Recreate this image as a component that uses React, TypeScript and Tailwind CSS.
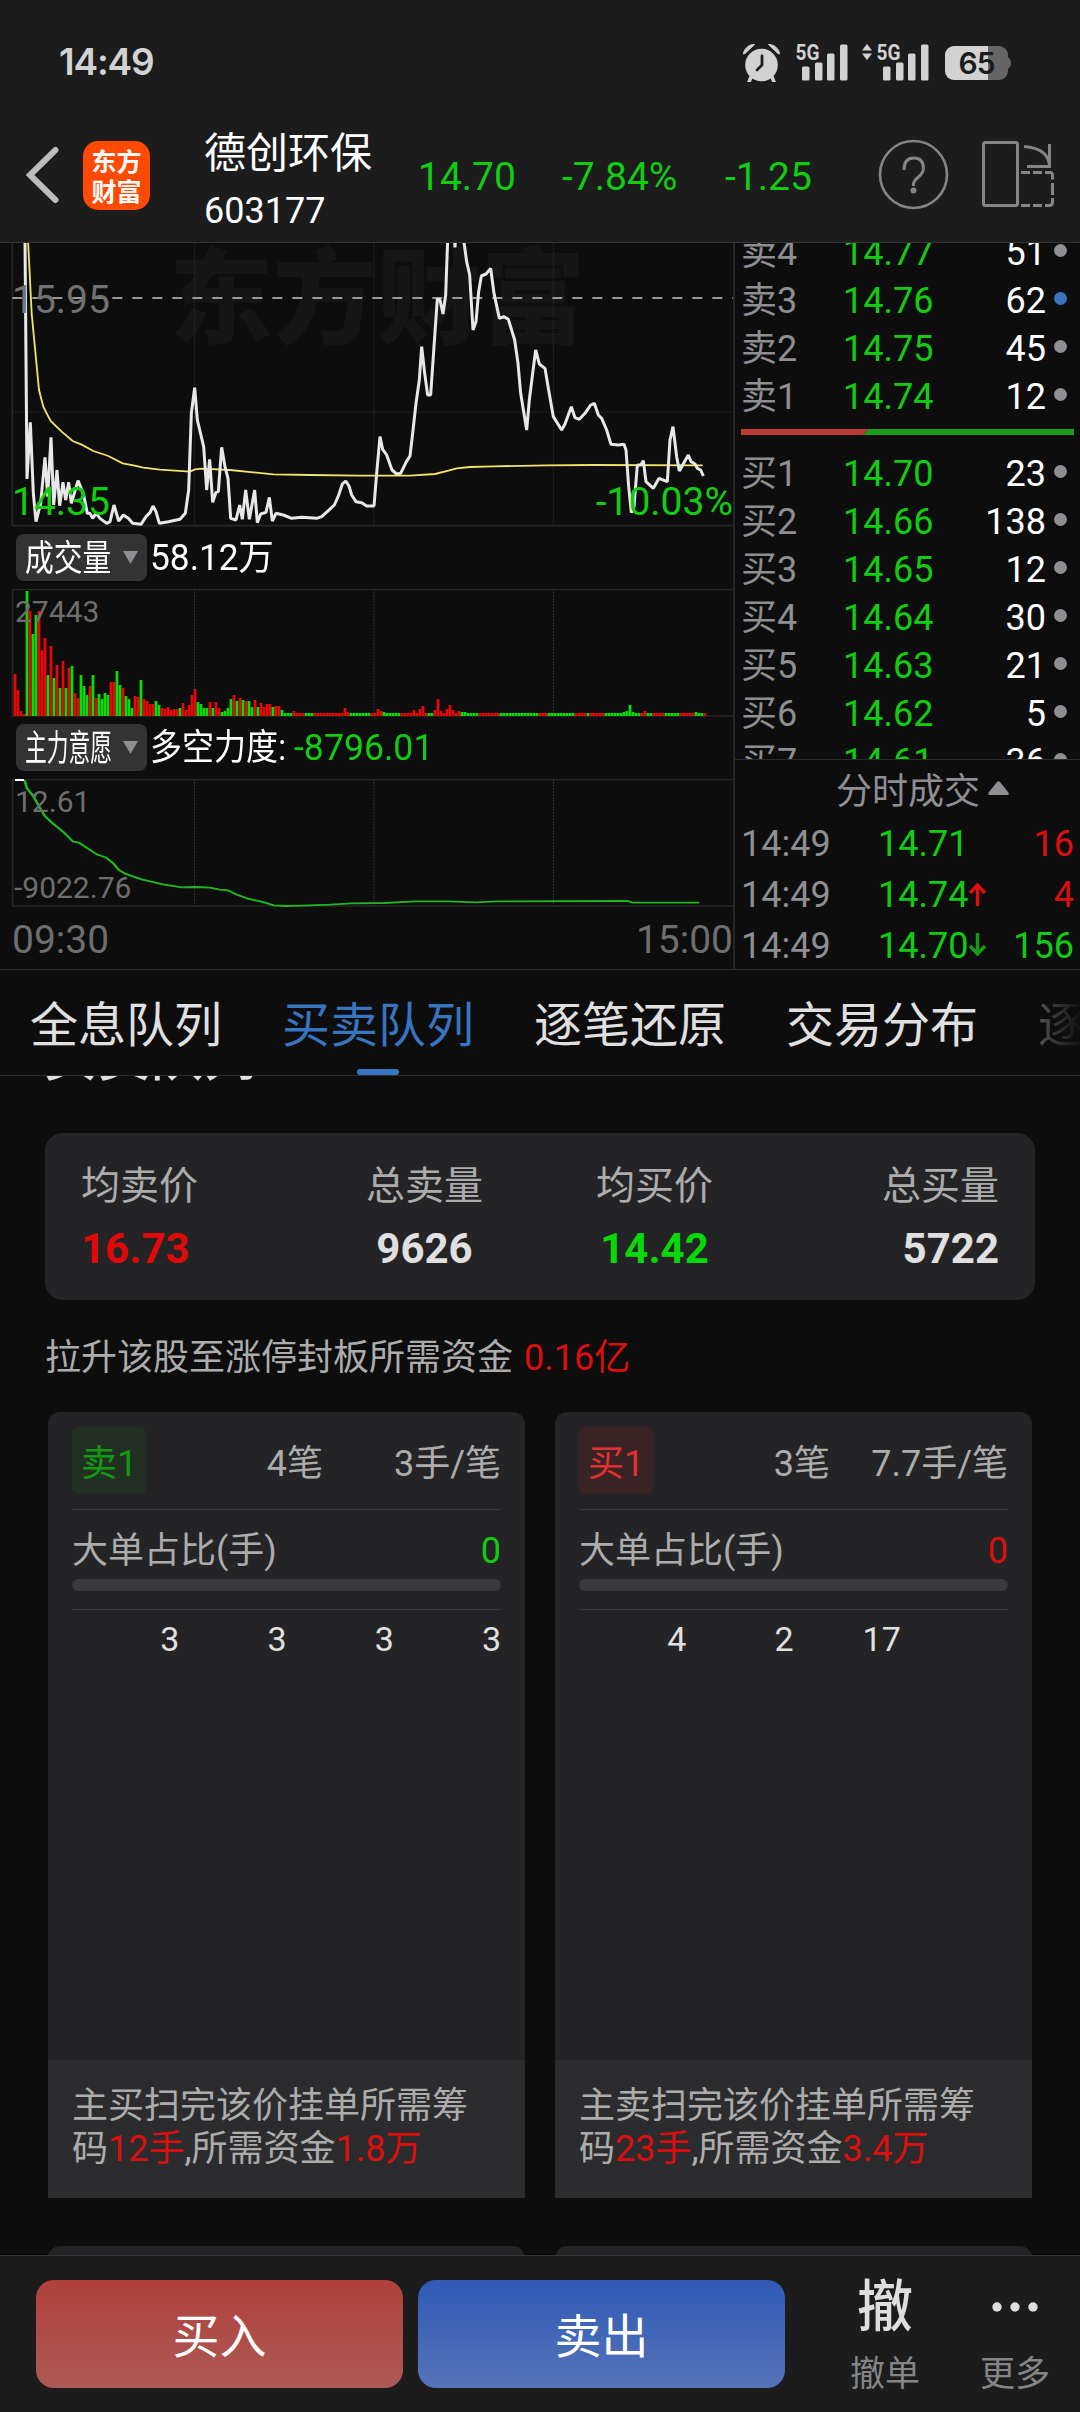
import React from "react";

const PRICE_LINE =
  "75,0 81,717 91,547 100,760 108,845 122,790 135,652 143,770 153,592 161,795 171,690 179,797 189,727 197,780 206,727 214,790 234,722 250,760 262,820 270,820 278,835 288,820 300,835 320,850 330,845 342,795 356,843 370,825 385,835 398,850 423,853 438,830 450,818 459,798 468,815 478,850 505,845 540,838 556,820 566,750 574,520 584,443 592,540 611,620 620,750 629,658 638,787 648,757 655,755 665,622 675,680 684,715 692,835 708,840 719,795 727,838 737,750 748,838 764,750 772,848 782,822 798,817 808,772 817,843 828,820 850,825 875,835 905,832 950,835 965,830 985,812 1003,795 1015,768 1027,732 1037,723 1047,738 1055,765 1068,785 1085,788 1100,798 1122,798 1130,700 1140,590 1148,628 1160,645 1176,690 1190,702 1202,700 1218,667 1230,648 1238,580 1248,490 1258,420 1265,320 1274,400 1283,465 1292,465 1302,320 1312,177 1320,180 1329,222 1337,165 1343,0 1360,-60 1365,22 1370,-60 1391,0 1400,65 1409,105 1419,270 1428,245 1436,155 1444,108 1458,102 1472,85 1482,160 1498,235 1512,230 1525,238 1544,300 1554,370 1562,460 1580,570 1588,480 1598,400 1607,330 1618,372 1635,385 1645,445 1660,530 1685,570 1695,552 1714,500 1725,533 1738,538 1755,520 1772,495 1783,490 1795,525 1805,535 1820,570 1833,613 1855,615 1872,613 1878,630 1886,740 1894,818 1902,800 1912,675 1922,675 1930,662 1938,725 1960,745 1977,715 2002,725 2010,600 2019,560 2030,650 2038,693 2048,675 2065,645 2073,665 2085,672 2092,685 2102,690 2110,708";

const AVERAGE_LINE =
  "84,0 95,220 117,450 130,500 140,520 152,543 185,575 218,603 245,614 280,633 325,648 368,670 400,676 430,683 480,689 570,695 585,688 605,686 690,690 760,697 820,703 930,705 1080,707 1230,707 1305,702 1345,692 1370,685 1410,681 1480,679 1640,676 1780,675 2108,676";

const FORCE_LINE =
  "52,750 57,775 70,797 83,830 95,858 110,878 135,907 155,935 167,938 205,973 225,983 240,1000 252,1020 265,1031 300,1048 345,1063 385,1072 415,1071 445,1073 465,1079 483,1081 500,1093 525,1106 560,1117 580,1126 605,1128 640,1127 700,1124 745,1120 815,1119 880,1114 950,1114 1010,1117 1050,1114 1330,1113 1340,1118 1482,1118";

// Per-minute volume: colour letter followed by bar height in pixels.
const OPENING_VOLUME =
  "r42 r26 r5 r2 g125 r105 g82 g101 r105 r66 r78 g41 r70 g38 r51 g28 r55 g28 r48 g50 r23 r18 g41 g30 g21 r30 g41 r18 g22 g17 g23 g21 r34 r34 g45 g31 r28 g20 g17 g8 r20 r19 g36 r17 r15 r12 r12 g15 g11 r8 r7 r9 r6 r7 r7 g8 r13 r6 r11 r21 r27 g14 g12 g8 g8 r14 g8 r14 r8 g4 g5 g8 g17 r21 g15 r18 g16 r15 g15 g9 r16 g9 r13 r9 r12 r12 g9 r10 r10 g6";

const TAIL_RUNS: [number, string][] = [
  [3, "g"], [4, "r"], [3, "g"], [12, "r"], [7, "g"], [4, "r"], [6, "g"], [9, "r"], [2, "g"],
  [9, "r"], [6, "g"], [7, "r"], [13, "g"], [3, "r"], [9, "g"], [4, "r"], [1, "g"], [5, "r"],
  [12, "g"], [2, "r"], [2, "g"], [4, "r"], [5, "g"], [5, "r"], [3, "g"], [4, "r"], [4, "g"],
];

const TAIL_SPIKES: Record<number, number> = {
  93: 5, 110: 8, 111: 4, 121: 7, 122: 5, 123: 4, 133: 6, 135: 7, 136: 10, 140: 6, 141: 17,
  142: 5, 144: 7, 145: 11, 146: 6, 148: 5, 149: 4, 150: 4, 203: 4, 204: 5, 205: 11, 206: 4,
  210: 5, 227: 4,
};

const volumeBars = (() => {
  const bars = OPENING_VOLUME.split(" ").map((t) => ({ c: t[0], h: Number(t.slice(1)) }));
  TAIL_RUNS.forEach(([n, c]) => {
    for (let i = 0; i < n; i++) bars.push({ c, h: TAIL_SPIKES[bars.length] ?? 3 });
  });
  return bars.slice(0, 231);
})();

function StatusBar() {
  const bars = [
    [0, 22, 14],
    [13, 18, 18],
    [25, 9, 27],
    [38, 0, 36],
  ];
  return (
    <div className="flex h-[108px] items-center justify-between pt-[15px] pl-[59px] pr-[68px]">
      <div className="font-['Inter'] text-[37px] font-semibold leading-[44px] tracking-[-1.2px] text-[#d2d2d2]">14:49</div>
      <svg width="270" height="40" viewBox="742 42 270 40" fill="#d2d2d2">
        <circle cx="761.500" cy="65" r="16.300" />
        <path d="M743.500 54c0-5 6-10 11-9.500l-9.500 9zM779.500 54c0-5-6-10-11-9.500l9.500 9z" stroke="#d2d2d2" strokeWidth="1" />
        <path d="M751 77l-2 5M772 77l2 5" stroke="#d2d2d2" strokeWidth="3.500" strokeLinecap="round" />
        <path d="M762 56v9l-5 5" stroke="#1c1c1c" strokeWidth="2.800" fill="none" strokeLinecap="round" />
        {[802, 883].map((x0) => (
          <g key={x0}>
            {bars.map(([dx, dy, h]) => (
              <rect key={dx} x={x0 + dx} y={44.500 + dy} width="7.500" height={h} rx="1.500" />
            ))}
            <text x={x0 - 6.500} y="60" fontFamily="Roboto" fontWeight="700" fontSize="22" textLength="24" lengthAdjust="spacingAndGlyphs">5G</text>
          </g>
        ))}
        <path d="M862 50.500l5-6.500 5 6.500zM862 53.500h10l-5 6.500z" />
        <clipPath id="level"><rect x="945" y="46" width="43" height="34" /></clipPath>
        <rect x="945" y="46" width="63" height="34" rx="9" fill="#656565" />
        <path d="M1007 57q4 1 4 6t-4 6z" fill="#656565" />
        <rect x="945" y="46" width="63" height="34" rx="9" clipPath="url(#level)" />
        <text x="976.500" y="74" textAnchor="middle" fontFamily="Inter" fontWeight="600" fontSize="30" letterSpacing="-1" fill="#1c1c1c">65</text>
      </svg>
    </div>
  );
}

function TitleBar() {
  return (
    <div className="flex h-[134px] items-start">
      <svg className="ml-[25px] mt-[38px]" width="36" height="58" fill="none" stroke="#bdbdbd" strokeWidth="6">
        <path d="M30.500 4L5 29l25.500 25" strokeLinecap="round" />
      </svg>
      <div className="ml-[22px] mt-[33px] flex h-[69px] w-[67px] flex-col items-center justify-center rounded-[15px] bg-[#ff4a03] font-['Noto_Sans_CJK_SC'] text-[25px] font-bold leading-[30px] text-white">
        <span className="h-[30px] -mt-[2px]">东方</span>
        <span className="h-[30px]">财富</span>
      </div>
      <div className="ml-[54px] mt-[19px] w-[214px] text-white">
        <div className="h-[54px] text-[42px] leading-[54px]">德创环保</div>
        <div className="mt-[8px] h-[44px] text-[36px] leading-[44px]">603177</div>
      </div>
      <div className="mt-[47px] flex text-[39px] leading-[44px] text-[#12cc12]">
        <span className="w-[144px]">14.70</span>
        <span className="w-[163px]">-7.84%</span>
        <span>-1.25</span>
      </div>
      <svg className="ml-auto mr-[22px] mt-[30px]" width="180" height="74" viewBox="878 138 180 74" fill="none" stroke="#858585" strokeWidth="3">
        <circle cx="913.500" cy="174.500" r="33.500" strokeWidth="2.600" />
        <path d="M904 170q0-12 9.700-12t9.700 10q0 5-5 9t-5 8v1" />
        <circle cx="913.500" cy="190.500" r="3" fill="#858585" stroke="none" />
        <rect x="983.500" y="142.500" width="34" height="63" rx="2" />
        <path d="M1024 146.500q25 2 25.500 20M1049.500 144v22.500h-22.500" />
        <path d="M1021 172.500h9M1033 172.500h9M1045 172.500h5q2.500 0 2.500 3v4M1052.500 183v12M1052.500 198v4q0 3.500-3 3.500h-4.500M1042 205.500h-9M1030 205.500h-9" />
      </svg>
    </div>
  );
}

function PriceChart() {
  return (
    <div className="relative h-[291px] w-[733px] overflow-hidden">
      <div className="absolute left-[169px] top-[-8px] font-['Noto_Sans_CJK_SC'] text-[104px] font-black leading-[112px] text-[#151515]">东方财富</div>
      <svg className="absolute left-0 top-0" width="734" height="285" viewBox="0 9 2202 855" fill="none">
        <path d="M37 0V857H2199" stroke="#262626" strokeWidth="5" />
        <path d="M584 9V857M1122 9V857M1660 9V857M37 516H2199" stroke="#303030" strokeWidth="3" strokeDasharray="4 4" />
        <path d="M37 174H2199" stroke="#999" strokeWidth="6" strokeDasharray="30 30" />
        <polyline points={AVERAGE_LINE} stroke="#f0e468" strokeWidth="5.500" />
        <polyline points={PRICE_LINE} stroke="#e8e8e8" strokeWidth="9" strokeLinejoin="bevel" />
      </svg>
      <div className="absolute left-[12px] top-[35px] text-[39px] leading-[44px] text-[#727272]">15.95</div>
      <div className="absolute left-[12px] top-[237px] text-[39px] leading-[44px] text-[#12cc12]">14.35</div>
      <div className="absolute right-0 top-[237px] text-[39px] leading-[44px] text-[#12cc12]">-10.03%</div>
    </div>
  );
}

function IndicatorButton({ children }: { children: React.ReactNode }) {
  return (
    <div className="ml-[16px] mr-[3px] flex h-[47px] w-[131px] items-center justify-between rounded-[8px] bg-[#333] pl-[9px] pr-[9px]">
      <div className="w-[90px] whitespace-nowrap pt-[2px] text-[36px] leading-[44px]">{children}</div>
      <svg width="15" height="13"><path d="M0 0h15l-7.500 13z" fill="#8e8e93" /></svg>
    </div>
  );
}

function GridLines() {
  return (
    <>
      <path d="M734 .5H12.500V127H734" stroke="#262626" strokeWidth="1.600" fill="none" />
      <path d="M194.500 0V127M374 0V127M553.500 0V127" stroke="#303030" strokeWidth="1" strokeDasharray="2 1" />
    </>
  );
}

function ChartColumn() {
  return (
    <div className="w-[733px] overflow-hidden text-white">
      <PriceChart />
      <div className="flex h-[47px] items-center text-[36px] leading-[47px]">
        <IndicatorButton><span className="inline-block origin-left scale-x-[0.8]">成交量</span></IndicatorButton>
        <span className="inline-block origin-left scale-x-[0.98] pt-[2px]">58.12万</span>
      </div>
      <div className="relative mt-[8px] h-[128px]">
        <svg className="block" width="734" height="128">
          <GridLines />
          {volumeBars.map((b, i) => (
            <rect key={i} x={13.600 + i * 3} y={127 - b.h} width="2.800" height={b.h} fill={b.c === "r" ? "#e60808" : "#08dc08"} />
          ))}
        </svg>
        <div className="absolute left-[15px] top-[5px] text-[30px] leading-[36px] text-[#6e6e6e]">27443</div>
      </div>
      <div className="mt-[7px] flex h-[47px] items-center text-[36px] leading-[47px]">
        <IndicatorButton><span className="inline-block origin-left scale-x-[0.605]">主力意愿</span></IndicatorButton>
        <span className="inline-block w-[144px] origin-left scale-x-[0.89] whitespace-nowrap pt-[2px]">多空力度:</span>
        <span className="inline-block origin-left scale-x-[0.99] pt-[2px] text-[#12cc12]">-8796.01</span>
      </div>
      <div className="relative mt-[8px] h-[128px]">
        <svg className="block" width="734" height="128">
          <GridLines />
          <g transform="translate(0 -249) scale(0.4719 0.33333)">
            <polyline points={FORCE_LINE} fill="none" stroke="#1fb81f" strokeWidth="5.500" />
          </g>
          <path d="M15 1h9" stroke="#fff" strokeWidth="2" />
        </svg>
        <div className="absolute left-[15px] top-[5px] text-[30px] leading-[36px] text-[#6e6e6e]">12.61</div>
        <div className="absolute left-[14px] top-[91px] text-[30px] leading-[36px] text-[#6e6e6e]">-9022.76</div>
      </div>
      <div className="mt-[11px] flex justify-between pl-[12px] text-[39px] leading-[44px] text-[#6e6e6e]">
        <span>09:30</span>
        <span>15:00</span>
      </div>
    </div>
  );
}

function QuoteRow({ label, price, qty, blue }: { label: string; price: string; qty: string; blue?: boolean }) {
  return (
    <div className="flex h-[48px] items-center pl-[6px] pr-[13px] text-[36px] leading-[48px]">
      <span className="w-[102px] text-[#8e8e93]">{label}</span>
      <span className="text-[#12cc12]">{price}</span>
      <span className="ml-auto text-white">{qty}</span>
      <span className={blue ? "mb-[5px] ml-[8px] size-[13px] rounded-full bg-[#3875c0]" : "mb-[5px] ml-[8px] size-[13px] rounded-full bg-[#8e8e93]"} />
    </div>
  );
}

function TradeRow({ price, qty, dir }: { price: string; qty: string; dir?: "up" | "down" }) {
  return (
    <div className="flex h-[51px] items-center pl-[6px] pr-[6px] text-[36px] leading-[51px] text-[#12cc12]">
      <span className="w-[137px] text-[#8e8e93]">14:49</span>
      <span>{price}</span>
      {dir && (
        <svg className="mb-[4px]" width="19" height="24" fill="none" strokeWidth="3.400" stroke={dir === "up" ? "#dc0f0f" : "#159a15"}>
          {dir === "up" ? <path d="M9.500 24V3M2 11l7.500-8L17 11" /> : <path d="M9.500 0v21M2 13l7.500 8 7.500-8" />}
        </svg>
      )}
      <span className={dir === "down" ? "ml-auto" : "ml-auto text-[#dc0f0f]"}>{qty}</span>
    </div>
  );
}

function QuoteColumn() {
  return (
    <div className="flex flex-1 flex-col border-l-2 border-[#262626]">
      <div className="h-[517px] shrink-0 overflow-hidden border-b border-[#2c2c2c]">
        <div className="-mt-[14px]">
          <QuoteRow label="卖4" price="14.77" qty="51" />
          <QuoteRow label="卖3" price="14.76" qty="62" blue />
          <QuoteRow label="卖2" price="14.75" qty="45" />
          <QuoteRow label="卖1" price="14.74" qty="12" />
        </div>
        <svg className="mb-[15px] ml-[6px] mt-[8px] block" width="333" height="6">
          <path d="M0 0h127l-5 6H0z" fill="#bf3a37" />
          <path d="M127 0h206v6H122z" fill="#1f9a1f" />
        </svg>
        <QuoteRow label="买1" price="14.70" qty="23" />
        <QuoteRow label="买2" price="14.66" qty="138" />
        <QuoteRow label="买3" price="14.65" qty="12" />
        <QuoteRow label="买4" price="14.64" qty="30" />
        <QuoteRow label="买5" price="14.63" qty="21" />
        <QuoteRow label="买6" price="14.62" qty="5" />
        <QuoteRow label="买7" price="14.61" qty="36" />
      </div>
      <div className="flex h-[59px] shrink-0 items-center pl-[101px] pt-[6px] text-[36px] leading-[53px] text-[#8e8e93]">
        分时成交
        <svg className="mb-[10px] ml-[8px]" width="21" height="14"><path d="M2 14q-3 0-1-3L9 1q1.500-1.500 3 0l8 10q2 3-1 3z" fill="#8e8e93" /></svg>
      </div>
      <TradeRow price="14.71" qty="16" />
      <TradeRow price="14.74" qty="4" dir="up" />
      <TradeRow price="14.70" qty="156" dir="down" />
    </div>
  );
}

function Tabs() {
  return (
    <div className="flex h-[107px] gap-[60px] overflow-hidden whitespace-nowrap border-y border-[#2c2c2c] pl-[30px] pt-[29px] text-[48px] leading-[54px] text-[#e0e0e0]">
      <div className="w-[192px] shrink-0">全息队列</div>
      <div className="flex w-[192px] shrink-0 flex-col items-center justify-between text-[#3875c0]">
        <span>买卖队列</span>
        <span className="h-[6px] w-[42px] rounded-[3px] bg-[#3875c0]" />
      </div>
      <div className="w-[192px] shrink-0">逐笔还原</div>
      <div className="w-[192px] shrink-0">交易分布</div>
      <div className="w-[48px] shrink-0 bg-linear-to-r from-[#555] to-[#111] to-[42px] bg-clip-text text-transparent">逐</div>
    </div>
  );
}

function Stat({ label, value, tone, align }: { label: string; value: string; tone: string; align: string }) {
  return (
    <div className={`flex flex-col ${align}`}>
      <span className="h-[50px] text-[39px] leading-[50px] text-[#acacac]">{label}</span>
      <span className={`mt-[13px] h-[50px] text-[42px] font-bold leading-[50px] ${tone}`}>{value}</span>
    </div>
  );
}

interface QueueProps {
  badge: string;
  badgeClass: string;
  count: string;
  avg: string;
  zeroClass: string;
  orders: string[];
  lead: string;
  lots: string;
  funds: string;
}

function QueueCard(p: QueueProps) {
  return (
    <div className="w-[477px] text-[36px] text-[#acacac]">
      <div className="h-[648px] rounded-t-[12px] bg-[#242426] px-[24px] pt-[15px]">
        <div className="flex h-[67px] items-center">
          <span className={`flex h-[67px] w-[74px] items-center justify-center rounded-[6px] pb-0 pt-[6px] ${p.badgeClass}`}>{p.badge}</span>
          <span className="mt-[6px] w-[177px] text-right">{p.count}</span>
          <span className="mt-[6px] flex-1 text-right">{p.avg}</span>
        </div>
        <div className="mt-[15px] h-px bg-[#3a3a3c]" />
        <div className="mt-[16px] flex h-[50px] items-center justify-between leading-[50px]">
          <span>大单占比(手)</span>
          <span className={p.zeroClass}>0</span>
        </div>
        <div className="mt-[3px] h-[12px] rounded-full bg-[#3a3a3c]" />
        <div className="mt-[18px] h-px bg-[#3a3a3c]" />
        <div className="mt-[8px] grid grid-cols-4 text-right text-[34px] leading-[42px] text-[#e0e0e0]">
          {p.orders.map((o, i) => (
            <span key={i}>{o}</span>
          ))}
        </div>
      </div>
      <div className="h-[138px] bg-[#2c2c2e] pl-[24px] pt-[25px] leading-[43px]">
        <div>{p.lead}</div>
        <div>
          码<span className="text-[#dc0f0f]">{p.lots}</span>,所需资金<span className="text-[#dc0f0f]">{p.funds}</span>
        </div>
      </div>
    </div>
  );
}

function QueuePanel() {
  return (
    <div className="h-[1179px] overflow-hidden">
      <div className="h-[57px] overflow-hidden">
        <div className="-mt-[48px] pl-[44px] text-[53px] font-medium leading-[60px] text-[#e0e0e0]">买卖队列</div>
      </div>
      <div className="mx-[45px] flex h-[167px] rounded-[18px] bg-[#242426] pl-[36px] pr-[36px] pt-[28px]">
        <Stat label="均卖价" value="16.73" tone="text-[#e00808]" align="w-[285px] items-start" />
        <Stat label="总卖量" value="9626" tone="text-[#e0e0e0]" align="items-center" />
        <Stat label="均买价" value="14.42" tone="text-[#08d808]" align="ml-[113px] items-center" />
        <Stat label="总买量" value="5722" tone="text-[#e0e0e0]" align="ml-auto items-end" />
      </div>
      <div className="mt-[33px] flex h-[50px] pl-[45px] text-[36px] leading-[50px] text-[#acacac]">
        拉升该股至涨停封板所需资金<span className="ml-[11px] text-[#dc0f0f]">0.16亿</span>
      </div>
      <div className="ml-[48px] mt-[29px] flex gap-[30px]">
        <QueueCard badge="卖1" badgeClass="bg-[#213023] text-[#129a12]" count="4笔" avg="3手/笔" zeroClass="text-[#12cc12]" orders={["3", "3", "3", "3"]} lead="主买扫完该价挂单所需筹" lots="12手" funds="1.8万" />
        <QueueCard badge="买1" badgeClass="bg-[#3a2324] text-[#e03030]" count="3笔" avg="7.7手/笔" zeroClass="text-[#dc0f0f]" orders={["4", "2", "17", ""]} lead="主卖扫完该价挂单所需筹" lots="23手" funds="3.4万" />
      </div>
      <div className="ml-[48px] mt-[48px] flex gap-[30px]">
        <div className="h-[60px] w-[477px] rounded-t-[12px] bg-[#242426]" />
        <div className="h-[60px] w-[477px] rounded-t-[12px] bg-[#242426]" />
      </div>
    </div>
  );
}

function ActionBar() {
  return (
    <div className="flex h-[157px] border-t border-[#343434] bg-[#1c1c1c] pl-[36px] pt-[24px]">
      <div className="flex h-[108px] w-[367px] items-center justify-center rounded-[18px] bg-linear-to-b from-[#b0403c] to-[#ad5955] pt-[7px] text-[47px] text-white">买入</div>
      <div className="ml-[15px] flex h-[108px] w-[367px] items-center justify-center rounded-[18px] bg-linear-to-b from-[#2f5ab6] to-[#5573b8] pt-[7px] text-[47px] text-white">卖出</div>
      <div className="ml-[50px] flex w-[100px] flex-col items-center">
        <span className="-mt-[3px] h-[60px] text-[56px] font-medium leading-[60px] text-[#dedede]">撤</span>
        <span className="mt-[13px] h-[50px] text-[35px] leading-[50px] text-[#858588]">撤单</span>
      </div>
      <div className="ml-[30px] flex w-[100px] flex-col items-center">
        <svg className="h-[60px]" width="46" height="60" fill="#dedede">
          <circle cx="5" cy="27" r="4.700" />
          <circle cx="23" cy="27" r="4.700" />
          <circle cx="41" cy="27" r="4.700" />
        </svg>
        <span className="mt-[10px] h-[50px] text-[35px] leading-[50px] text-[#858588]">更多</span>
      </div>
    </div>
  );
}

export default function App() {
  return (
    <div className="h-[2412px] w-[1080px] overflow-hidden bg-[#0d0d0d] font-[Roboto,'Noto_Sans_CJK_SC',sans-serif]">
      <div className="h-[243px] border-b border-[#343434] bg-[#1c1c1c]">
        <StatusBar />
        <TitleBar />
      </div>
      <div className="flex h-[726px] overflow-hidden">
        <ChartColumn />
        <QuoteColumn />
      </div>
      <Tabs />
      <QueuePanel />
      <ActionBar />
    </div>
  );
}
